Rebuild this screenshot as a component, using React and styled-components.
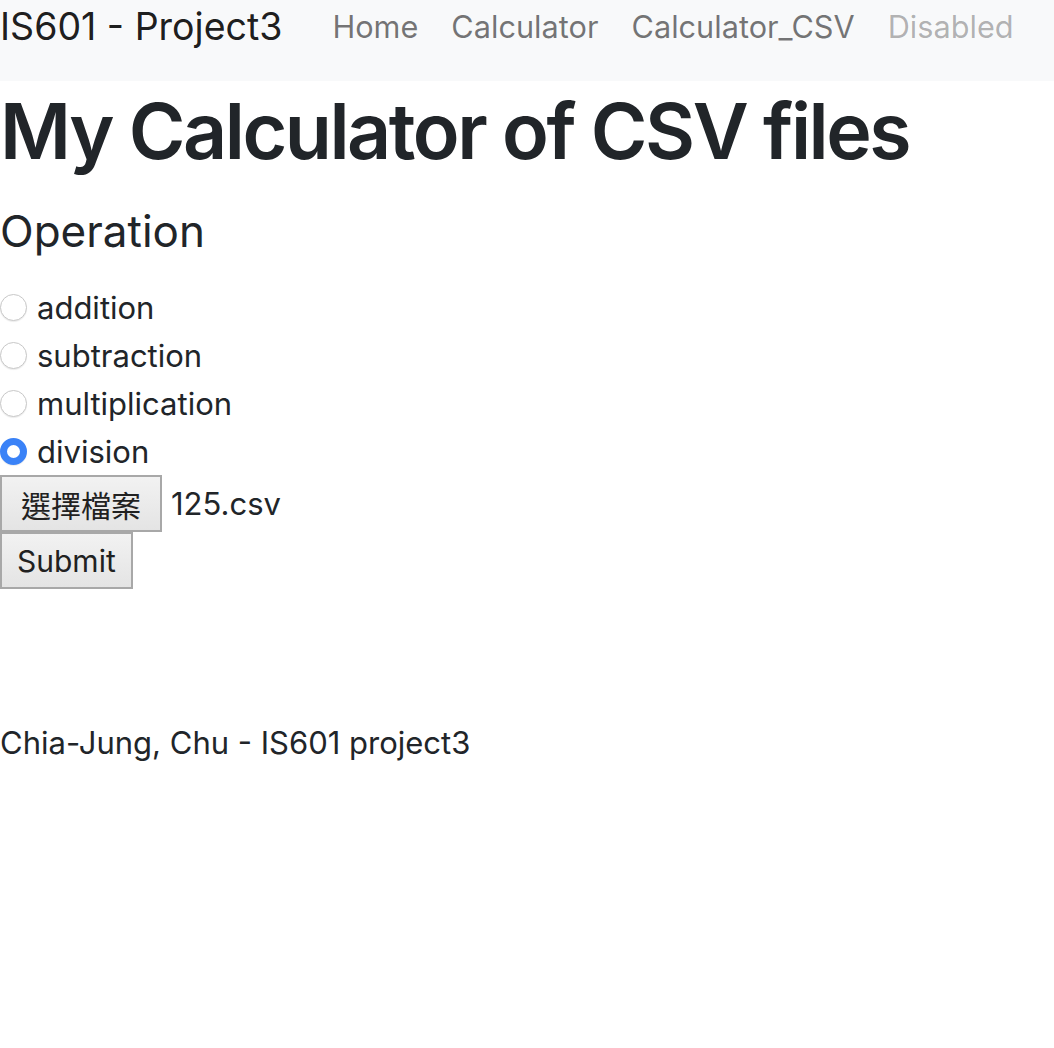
import styled, { createGlobalStyle } from 'styled-components';

const GlobalStyle = createGlobalStyle`
  html, body {
    margin: 0;
    padding: 0;
    background: #fff;
  }
  body {
    font-family: Inter, 'Noto Sans CJK TC', sans-serif;
    color: #212529;
  }
`;

const Navbar = styled.nav`
  display: flex;
  align-items: flex-start;
  height: 81px;
  background: #f8f9fa;
`;

const Brand = styled.a`
  font-size: 37.5px;
  line-height: 54px;
  color: rgba(0, 0, 0, 0.9);
  text-decoration: none;
  margin-right: 50px;
`;

const NavList = styled.ul`
  display: flex;
  gap: 33px;
  list-style: none;
  margin: 0;
  padding: 0;
`;

const NavLink = styled.a`
  font-size: 30.7px;
  line-height: 54px;
  text-decoration: none;
  color: ${(p) => (p.$disabled ? 'rgba(0, 0, 0, 0.3)' : 'rgba(0, 0, 0, 0.55)')};
`;

const Title = styled.h1`
  margin: 4px 0 0;
  font-size: 77px;
  font-weight: 600;
  letter-spacing: -2.5px;
  line-height: 1.2;
`;

const Subtitle = styled.h2`
  margin: 28px 0 25px;
  font-size: 44px;
  font-weight: 400;
  line-height: 1.2;
`;

const Form = styled.form`
  display: flex;
  flex-direction: column;
  align-items: flex-start;
`;

const RadioRow = styled.label`
  display: flex;
  align-items: center;
  gap: 10px;
  height: 48px;
  font-size: 31px;
`;

const Radio = styled.input`
  appearance: none;
  margin: 0;
  width: 27px;
  height: 27px;
  border-radius: 50%;
  border: 1px solid #c8c8c8;
  background: #fff;
  box-shadow: 0 1px 1px rgba(0, 0, 0, 0.08);

  &:checked {
    border: 7px solid #3a82f7;
    background: #fff;
  }
`;

const FileRow = styled.div`
  display: flex;
  align-items: center;
  gap: 9px;
  font-size: 31px;
`;

const Button = styled.button`
  font-family: Inter, 'Noto Sans CJK TC', sans-serif;
  font-size: 30px;
  color: #212121;
  height: 57px;
  padding: 0 ${(p) => (p.$wide ? '19px' : '15px')};
  background: linear-gradient(#f2f2f2, #e4e4e4);
  border: 2px solid #a8a8a8;
  border-radius: 0;
`;

const Footer = styled.p`
  margin: 135px 0 0;
  font-size: 31px;
`;

export default function App() {
  const ops = ['addition', 'subtraction', 'multiplication', 'division'];
  return (
    <>
      <GlobalStyle />
      <Navbar>
        <Brand href="#">IS601 - Project3</Brand>
        <NavList>
          <li><NavLink href="#">Home</NavLink></li>
          <li><NavLink href="#">Calculator</NavLink></li>
          <li><NavLink href="#">Calculator_CSV</NavLink></li>
          <li><NavLink $disabled>Disabled</NavLink></li>
        </NavList>
      </Navbar>
      <Title>My Calculator of CSV files</Title>
      <Subtitle>Operation</Subtitle>
      <Form onSubmit={(e) => e.preventDefault()}>
        {ops.map((op) => (
          <RadioRow key={op}>
            <Radio type="radio" name="operation" value={op} defaultChecked={op === 'division'} />
            {op}
          </RadioRow>
        ))}
        <FileRow>
          <Button type="button" $wide>選擇檔案</Button>
          <span>125.csv</span>
        </FileRow>
        <Button type="submit">Submit</Button>
      </Form>
      <Footer>Chia-Jung, Chu - IS601 project3</Footer>
    </>
  );
}
